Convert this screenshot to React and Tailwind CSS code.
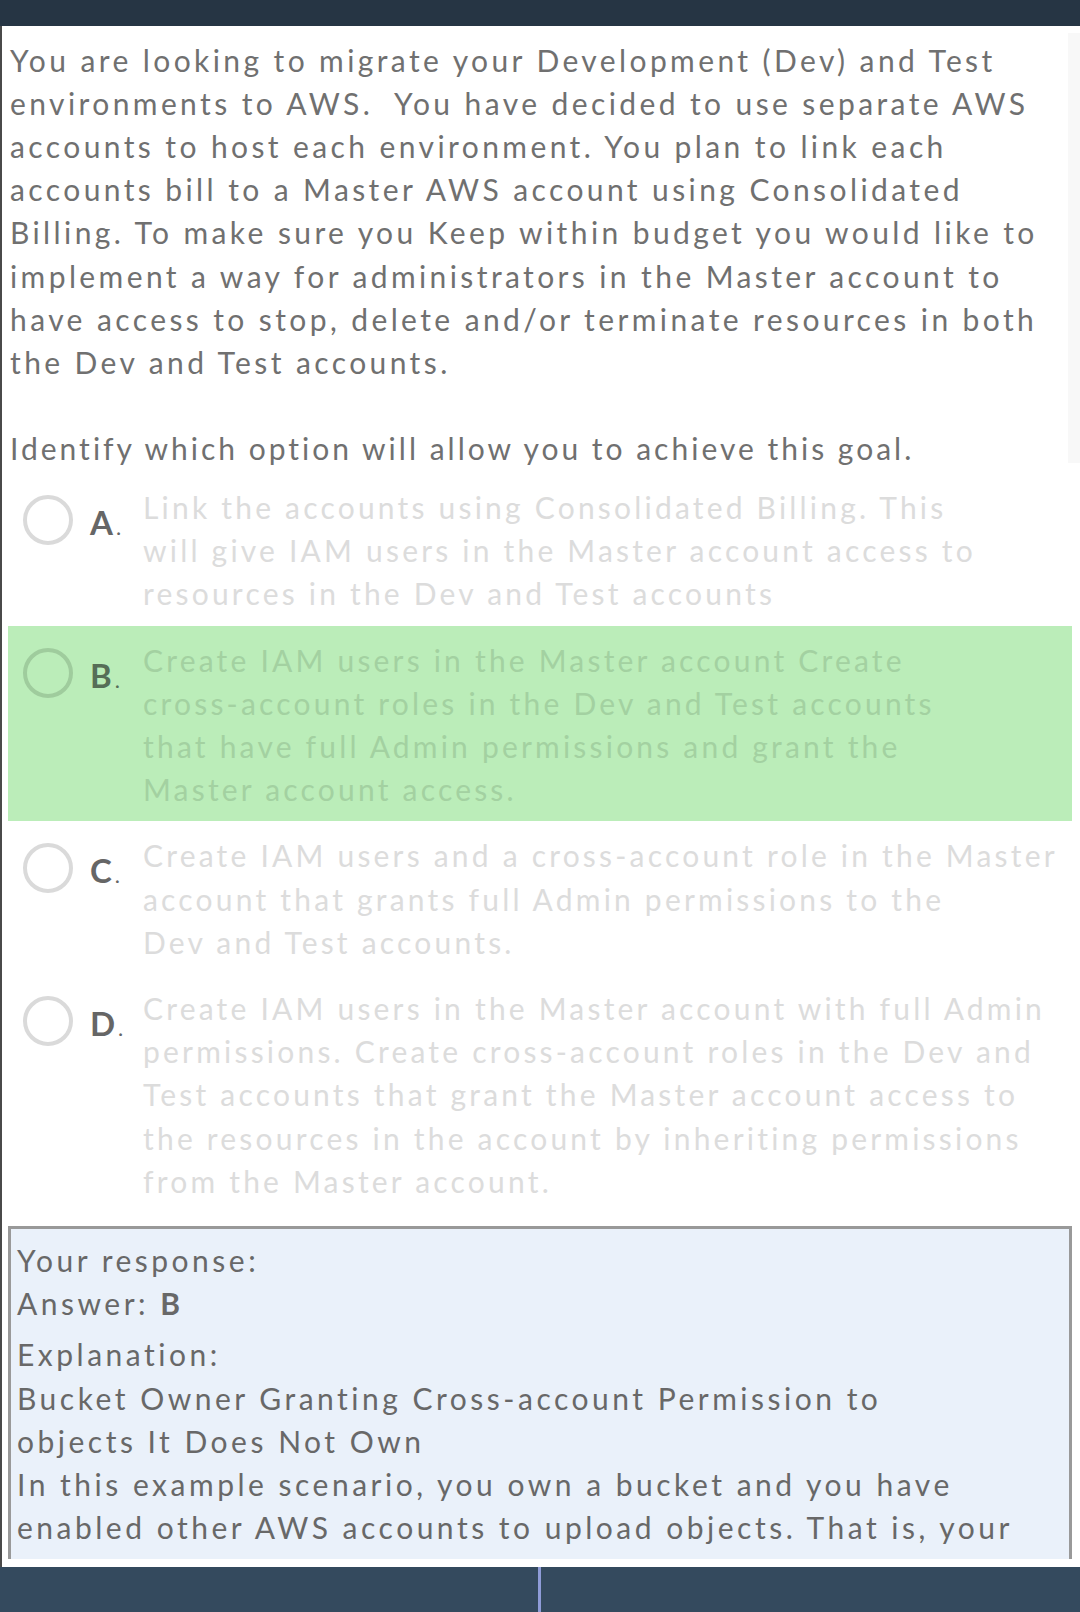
import React from 'react'

const QUESTION = [
  'You are looking to migrate your Development (Dev) and Test',
  'environments to AWS.\u00a0 You have decided to use separate AWS',
  'accounts to host each environment. You plan to link each',
  'accounts bill to a Master AWS account using Consolidated',
  'Billing. To make sure you Keep within budget you would like to',
  'implement a way for administrators in the Master account to',
  'have access to stop, delete and/or terminate resources in both',
  'the Dev and Test accounts.',
]

const OPTIONS = [
  {
    key: 'A',
    lines: [
      'Link the accounts using Consolidated Billing. This',
      'will give IAM users in the Master account access to',
      'resources in the Dev and Test accounts',
    ],
  },
  {
    key: 'B',
    correct: true,
    lines: [
      'Create IAM users in the Master account Create',
      'cross-account roles in the Dev and Test accounts',
      'that have full Admin permissions and grant the',
      'Master account access.',
    ],
  },
  {
    key: 'C',
    lines: [
      'Create IAM users and a cross-account role in the Master',
      'account that grants full Admin permissions to the',
      'Dev and Test accounts.',
    ],
  },
  {
    key: 'D',
    lines: [
      'Create IAM users in the Master account with full Admin',
      'permissions. Create cross-account roles in the Dev and',
      'Test accounts that grant the Master account access to',
      'the resources in the account by inheriting permissions',
      'from the Master account.',
    ],
  },
]

const EXPLANATION = [
  'Bucket Owner Granting Cross-account Permission to',
  'objects It Does Not Own',
  'In this example scenario, you own a bucket and you have',
  'enabled other AWS accounts to upload objects. That is, your',
  'bucket can have objects that other AWS accounts own.',
]

function Option({ option }) {
  const on = option.correct
  return (
    <div className={`ml-[6px] mr-[8px] flex items-start pb-[10px] pl-[15px] pt-[13px] ${on ? 'bg-[#bbedb9]' : ''}`}>
      <div className={`mt-[9px] size-[50px] shrink-0 rounded-full border-4 ${on ? 'border-[#9fcc9d]' : 'border-[#dadada]'}`} />
      <div className={`ml-[17px] mt-[15px] w-[53px] shrink-0 text-[33px] leading-[43.2px] ${on ? 'text-[#566e57]' : 'text-[#666]'}`}>
        <span className="font-bold">{option.key}</span>
        <span className="ml-[3px] text-[22px]">.</span>
      </div>
      <div className={`text-[30px] leading-[43.2px] tracking-[3.2px] whitespace-nowrap ${on ? 'text-[#a3d1a1]' : 'text-[#dcdcdc]'}`}>
        {option.lines.map((l) => (
          <div key={l}>{l}</div>
        ))}
      </div>
    </div>
  )
}

export default function App() {
  return (
    <div className="flex h-[1612px] w-[1080px] flex-col overflow-hidden bg-white font-['Lato',sans-serif]">
      <div className="h-[26px] shrink-0 bg-[#263544]" />

      <div className="relative flex min-h-0 flex-1 flex-col border-l-2 border-[#4a4a4a] bg-white pb-[8px]">
        <div className="absolute right-0 top-[7px] h-[430px] w-[12px] bg-[#f8f8f8]" />
        <div className="relative min-h-0 flex-1 overflow-hidden">
          <div className="pl-[8px] pt-[12.5px] text-[30px] leading-[43.2px] tracking-[3.4px] whitespace-nowrap text-[#707070]">
            {QUESTION.map((l) => (
              <div key={l}>{l}</div>
            ))}
            <div className="h-[43.2px]" />
            <div className="tracking-[3px]">Identify which option will allow you to achieve this goal.</div>
          </div>

          <div className="mt-[2.5px]">
            {OPTIONS.map((o) => (
              <Option key={o.key} option={o} />
            ))}
          </div>

          <div className="ml-[6px] mr-[8px] mt-[13px] border-[3px] border-[#999] bg-[#eaf1fa] pl-[6px] pt-[10px] text-[30px] leading-[43.2px] tracking-[3.5px] whitespace-nowrap text-[#686868]">
            <div>Your response:</div>
            <div className="mb-[8px]">
              Answer: <span className="font-bold">B</span>
            </div>
            <div>Explanation:</div>
            {EXPLANATION.map((l) => (
              <div key={l}>{l}</div>
            ))}
            <div className="h-[200px]" />
          </div>
        </div>
      </div>

      <div className="flex h-[45px] shrink-0 bg-[#344a5e]">
        <div className="w-[541px] border-r-[3px] border-[#8f9cd8]" />
        <div className="flex-1" />
      </div>
    </div>
  )
}
